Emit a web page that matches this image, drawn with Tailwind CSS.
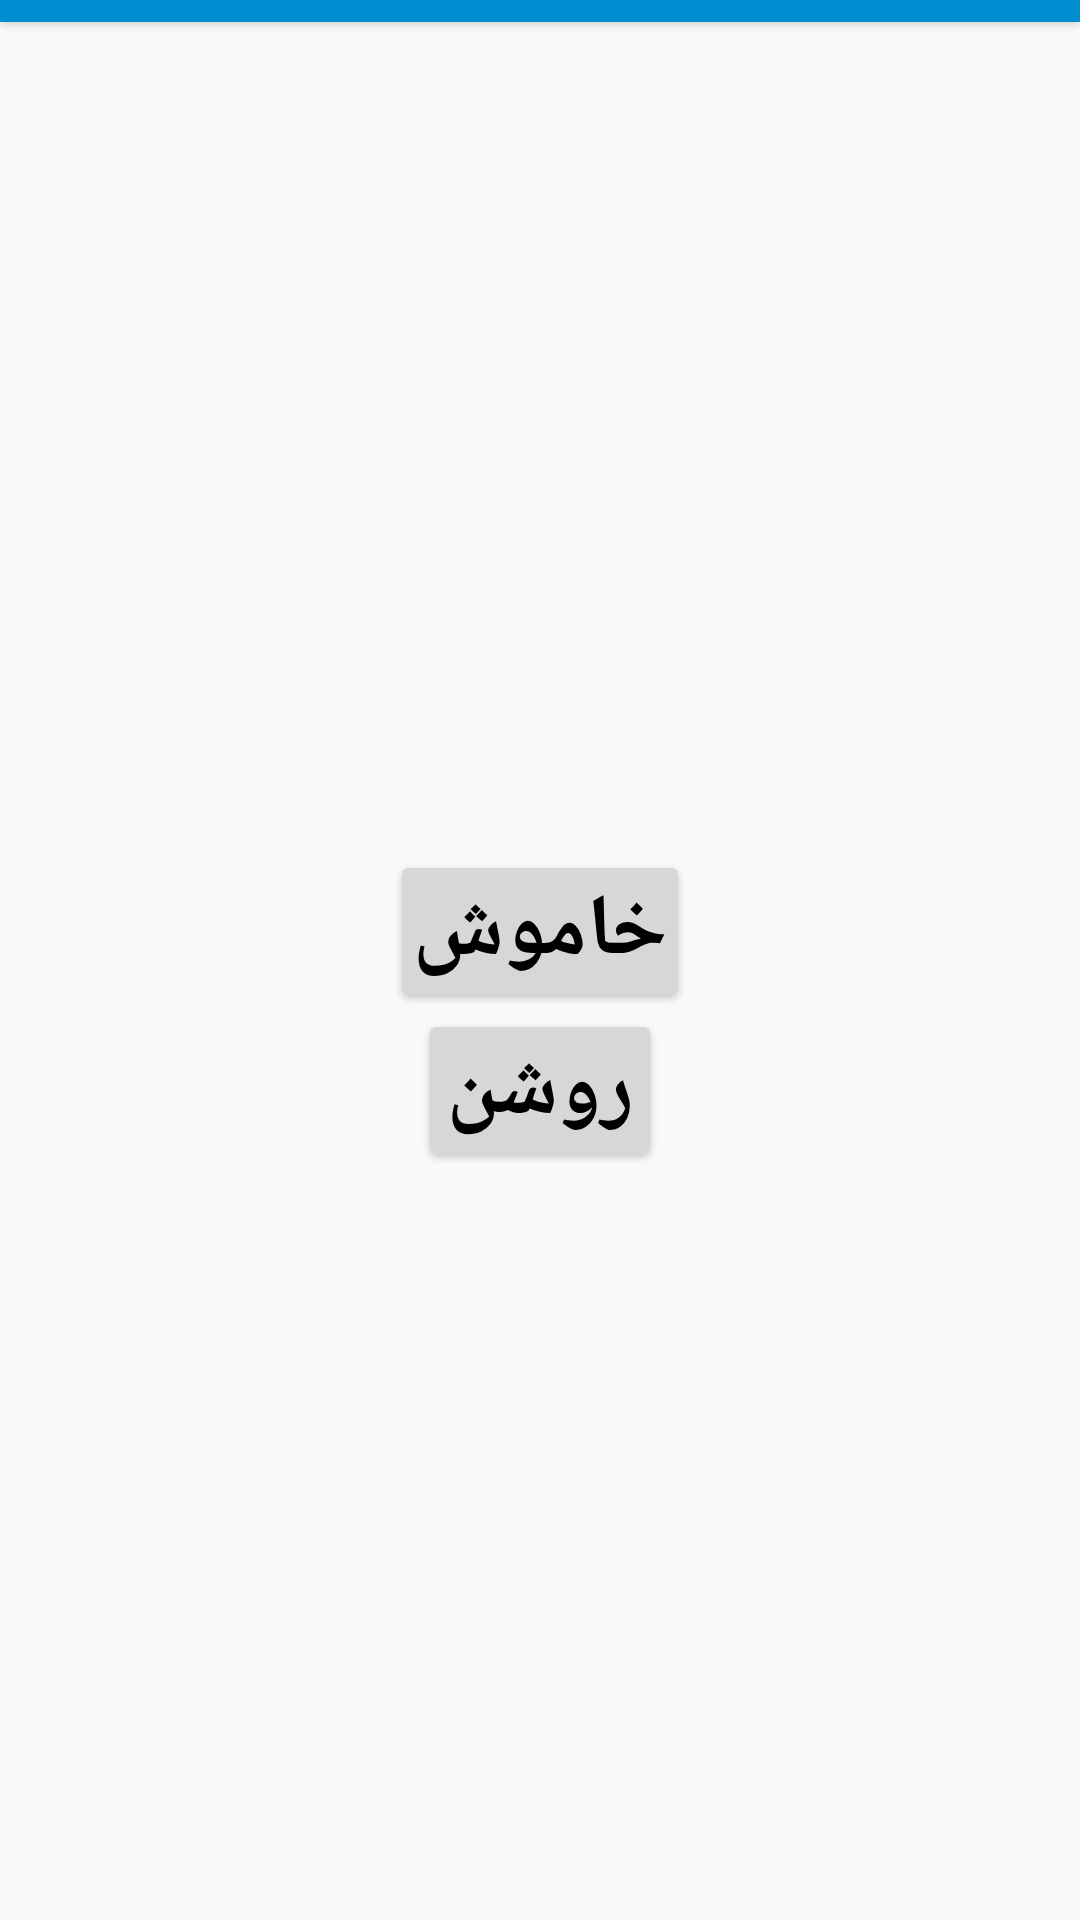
<!DOCTYPE html>
<html lang="fa" dir="rtl">
<head>
  <meta charset="UTF-8">
  <meta name="viewport" content="width=device-width, initial-scale=1">
  <title>خاموش / روشن</title>
  <script src="https://cdn.jsdelivr.net/npm/@tailwindcss/browser@4"></script>
</head>
<body class="min-h-screen flex flex-col bg-[#fafafa] text-black font-['Noto_Naskh_Arabic','DejaVu_Sans',sans-serif]">

  <!-- Top bar -->
  <header class="h-[22px] bg-[#008dcf] shadow-[0_2px_10px_rgba(0,0,0,0.18)]"></header>

  <!-- Switch buttons -->
  <main class="flex-1 flex flex-col items-center justify-center gap-8 pt-20">
    <button type="button" class="h-[127px] min-w-[276px] px-2 pt-2 rounded-md bg-[#d6d8d7] text-[86px] leading-[100px] font-bold shadow-[0_3px_8px_rgba(0,0,0,0.22)]">خاموش</button>
    <button type="button" class="h-[127px] min-w-[220px] px-2 pt-2 rounded-md bg-[#d6d8d7] text-[86px] leading-[100px] font-bold shadow-[0_3px_8px_rgba(0,0,0,0.22)]">روشن</button>
  </main>

</body>
</html>
